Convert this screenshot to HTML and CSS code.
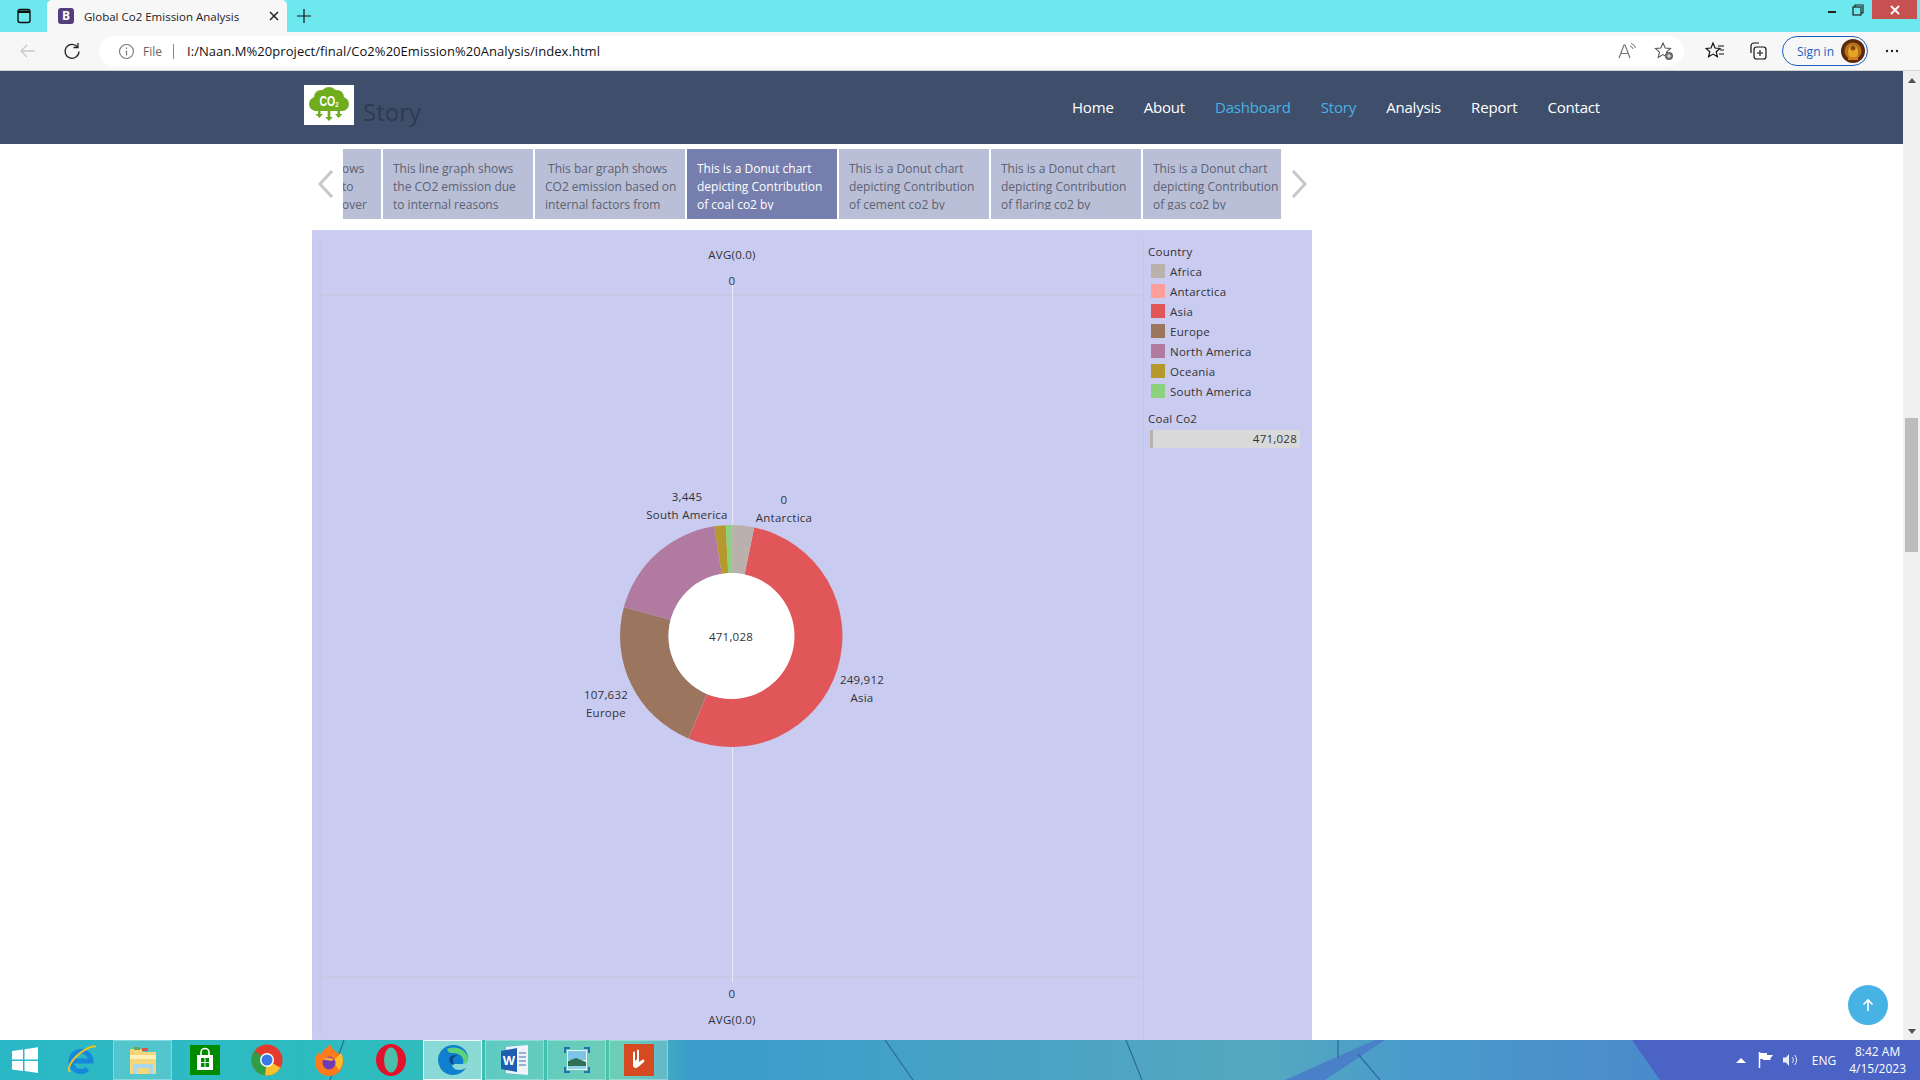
FILE: index.html
```html
<!DOCTYPE html>
<html lang="en">
<head>
    <meta charset="UTF-8">
    <title>Global Co2 Emission Analysis</title>
    <link rel="stylesheet" href="styles.css">
</head>
<body>
    <div class="screen">
        <div class="tabstrip">
            <svg class="winicon" width="16" height="16" viewBox="0 0 16 16"><rect x="2" y="1.500" width="12" height="13" rx="2" fill="none" stroke="#111" stroke-width="1.400"/><path d="M2 2.500h12v2.500h-12z" fill="#111"/></svg>
            <div class="tab">
                <span class="favicon">B</span>
                <span class="tabtitle">Global Co2 Emission Analysis</span>
                <svg width="10" height="10" viewBox="0 0 10 10"><path d="M1 1l8 8M9 1l-8 8" stroke="#222" stroke-width="1.500"/></svg>
            </div>
            <svg class="newtab" width="16" height="16" viewBox="0 0 16 16"><path d="M8 1v14M1 8h14" stroke="#111" stroke-width="1.200"/></svg>
            <div class="winbtns">
                <svg width="10" height="10" viewBox="0 0 10 10"><path d="M1 7h8" stroke="#222" stroke-width="2"/></svg>
                <svg class="restore" width="12" height="12" viewBox="0 0 12 12"><rect x="1" y="3" width="8" height="8" fill="none" stroke="#222" stroke-width="1.200"/><path d="M3 3v-2h8v8h-2" fill="none" stroke="#222" stroke-width="1.200"/></svg>
                <div class="closebtn"><svg width="10" height="10" viewBox="0 0 10 10"><path d="M1 1l8 8M9 1l-8 8" stroke="#fff" stroke-width="1.800"/></svg></div>
            </div>
        </div>

        <div class="toolbar">
            <svg class="backbtn" width="18" height="18" viewBox="0 0 18 18"><path d="M16 9h-14M8 3l-6 6 6 6" fill="none" stroke="#c9c9c9" stroke-width="1.300"/></svg>
            <svg class="reload" width="18" height="18" viewBox="0 0 18 18"><path d="M14.500 5a7 7 0 1 0 1.500 4.500" fill="none" stroke="#222" stroke-width="1.300"/><path d="M15 1v4.500h-4.500" fill="none" stroke="#222" stroke-width="1.300"/></svg>
            <div class="addressbar">
                <svg width="17" height="17" viewBox="0 0 17 17"><circle cx="8.500" cy="8.500" r="7" fill="none" stroke="#777" stroke-width="1.100"/><path d="M8.500 7.500v5M8.500 4.500v1.500" stroke="#777" stroke-width="1.200"/></svg>
                <span class="fileword">File</span>
                <span class="addrsep"></span>
                <span class="addr">I:/Naan.M%20project/final/Co2%20Emission%20Analysis/index.html</span>
                <span class="addrgap"></span>
                <svg width="20" height="18" viewBox="0 0 20 18"><path d="M2 16l5-13h1l5 13M4 11.500h7" fill="none" stroke="#777" stroke-width="1.200"/><path d="M13 4a4 4 0 0 1 3 3M14 1.500a6 6 0 0 1 4.500 4.500" fill="none" stroke="#777" stroke-width="1"/></svg>
                <svg class="favadd" width="20" height="20" viewBox="0 0 20 20"><path d="M9 2l2.200 5 5.300.5-4 3.600 1.200 5.300-4.700-2.800-4.700 2.800 1.200-5.300-4-3.600 5.300-.5z" fill="none" stroke="#555" stroke-width="1.100"/><circle cx="15" cy="15" r="4" fill="#666"/><path d="M15 12.800v4.400M12.800 15h4.400" stroke="#fff" stroke-width="1"/></svg>
            </div>
            <svg class="favlist" width="20" height="20" viewBox="0 0 20 20"><path d="M8 2l2 5 5 .4-3.800 3.300 1.200 5.100-4.400-2.700-4.400 2.700 1.200-5.100-3.800-3.300 5-.4z" fill="none" stroke="#111" stroke-width="1.200"/><path d="M13 5h6M15 9h4M14 13h5" stroke="#111" stroke-width="1.100"/></svg>
            <svg class="collections" width="20" height="20" viewBox="0 0 20 20"><path d="M3 12v-7a3 3 0 0 1 3-3h5" fill="none" stroke="#111" stroke-width="1.200"/><rect x="6" y="6" width="12" height="12" rx="2.500" fill="none" stroke="#111" stroke-width="1.200"/><path d="M12 9v6M9 12h6" stroke="#111" stroke-width="1.100"/></svg>
            <div class="signin">
                <span>Sign in</span>
                <svg width="24" height="24" viewBox="0 0 24 24"><circle cx="12" cy="12" r="12" fill="#5a2a0c"/><circle cx="12" cy="12" r="8.500" fill="#b5701a"/><ellipse cx="12" cy="13" rx="5" ry="7" fill="#e6a526"/><circle cx="12" cy="9" r="2.500" fill="#8a4a10"/><path d="M7 18h10v3h-10z" fill="#d87b14"/></svg>
            </div>
            <svg class="moredots" width="14" height="4" viewBox="0 0 14 4"><circle cx="2" cy="2" r="1.200" fill="#222"/><circle cx="7" cy="2" r="1.200" fill="#222"/><circle cx="12" cy="2" r="1.200" fill="#222"/></svg>
        </div>

        <div class="viewport">
            <div class="page">
                <nav class="navbar">
                    <div class="brand">
                        <div class="logo">
                            <svg width="40" height="40" viewBox="0 0 40 40">
                                <g fill="#6fad1e">
                                    <circle cx="7" cy="19" r="7"/>
                                    <circle cx="33" cy="19" r="7"/>
                                    <circle cx="12" cy="12" r="7"/>
                                    <circle cx="28" cy="12" r="7"/>
                                    <circle cx="20" cy="10" r="8"/>
                                    <path d="M7 14h26v12h-26z"/>
                                    <path d="M9 26h2.500v3h2.500l-3.700 4-3.700-4h2.400zM18.700 26h2.600v6h2.600l-3.900 4-3.900-4h2.600zM28.500 26h2.500v3h2.400l-3.700 4-3.700-4h2.500z"/>
                                </g>
                                <text class="logotext" transform="translate(20 21) scale(0.75 1)">CO<tspan class="logosub" dy="1">2</tspan></text>
                            </svg>
                        </div>
                        <span class="brandname">Story</span>
                    </div>
                    <ul class="navlinks">
                        <li>Home</li>
                        <li>About</li>
                        <li class="active">Dashboard</li>
                        <li class="active">Story</li>
                        <li>Analysis</li>
                        <li>Report</li>
                        <li>Contact</li>
                    </ul>
                </nav>

                <div class="storyrow">
                    <svg class="arrow" width="18" height="28" viewBox="0 0 18 28"><path d="M15 1l-12 13 12 13" fill="none" stroke="#c8c8c8" stroke-width="3"/></svg>
                    <div class="points">
                        <div class="point cut"><p>ows<br>to<br>over</p></div>
                        <div class="point"><p>This line graph shows the CO2 emission due to internal reasons</p></div>
                        <div class="point"><p>&nbsp;This bar graph shows CO2 emission based on internal factors from</p></div>
                        <div class="point current"><p>This is a Donut chart depicting Contribution of coal co2 by</p></div>
                        <div class="point"><p>This is a Donut chart depicting Contribution of cement co2 by</p></div>
                        <div class="point"><p>This is a Donut chart depicting Contribution of flaring co2 by</p></div>
                        <div class="point last"><p>This is a Donut chart depicting Contribution of gas co2 by</p></div>
                    </div>
                    <svg class="arrow" width="18" height="28" viewBox="0 0 18 28"><path d="M3 1l12 13-12 13" fill="none" stroke="#c8c8c8" stroke-width="3"/></svg>
                </div>

                <div class="vizpanel">
                    <svg class="donutview" width="831" height="810" viewBox="312 230 831 810">
                        <path class="gridline" d="M320 238v797M320 295h824M320 977h824"/>
                        <path class="axisline" d="M732.500 283v699"/>
                        <text class="lbl" x="732" y="259">AVG(0.0)</text>
                        <text class="lbl" x="732" y="285">0</text>
                        <text class="lbl" x="732" y="998">0</text>
                        <text class="lbl" x="732" y="1024">AVG(0.0)</text>

                        <path fill="#e15759" d="M754.200 527.400A111 111 0 1 1 688.500 738.400L707.100 693.900A62.700 62.700 0 1 0 744.500 574.700Z"/>
                        <path fill="#9c755f" d="M688.300 738.400A111 111 0 0 1 623.800 607.300L670.500 619.800A62.700 62.700 0 0 0 707 693.800Z"/>
                        <path fill="#b07aa1" d="M623.800 607.300A111 111 0 0 1 714.300 526.300L721.700 574.100A62.700 62.700 0 0 0 670.500 619.800Z"/>
                        <path fill="#b6992d" d="M714.300 526.300A111 111 0 0 1 725.700 525.200L728.200 573.400A62.700 62.700 0 0 0 721.700 574.100Z"/>
                        <path fill="#8cd17d" d="M725.700 525.200A111 111 0 0 1 731.500 525L731.500 573.300A62.700 62.700 0 0 0 728.200 573.400Z"/>
                        <path fill="#bab0ac" d="M731.500 525A111 111 0 0 1 754.200 527.400L744.500 574.700A62.700 62.700 0 0 0 731.500 573.300Z"/>
                        <circle cx="731.500" cy="636" r="63" fill="#fff"/>

                        <text class="lbl" x="687" y="501">3,445</text>
                        <text class="lbl" x="687" y="519">South America</text>
                        <text class="lbl" x="784" y="504">0</text>
                        <text class="lbl" x="784" y="522">Antarctica</text>
                        <text class="lbl" x="862" y="684">249,912</text>
                        <text class="lbl" x="862" y="702">Asia</text>
                        <text class="lbl" x="606" y="699">107,632</text>
                        <text class="lbl" x="606" y="717">Europe</text>
                        <text class="lbl" x="731" y="641">471,028</text>
                    </svg>
                    <aside class="legend">
                        <div class="legendtitle">Country</div>
                        <ul class="legendlist">
                            <li><i class="swatch africa"></i>Africa</li>
                            <li><i class="swatch antarctica"></i>Antarctica</li>
                            <li><i class="swatch asia"></i>Asia</li>
                            <li><i class="swatch europe"></i>Europe</li>
                            <li><i class="swatch northam"></i>North America</li>
                            <li><i class="swatch oceania"></i>Oceania</li>
                            <li><i class="swatch southam"></i>South America</li>
                        </ul>
                        <div class="legendtitle coal">Coal Co2</div>
                        <div class="coalbar">471,028</div>
                    </aside>
                </div>
                <div class="totop"><svg width="14" height="14" viewBox="0 0 14 14"><path d="M7 13v-11M2.500 6.500l4.500-4.500 4.500 4.500" fill="none" stroke="#fff" stroke-width="1.600"/></svg></div>
            </div>
            <div class="scrollbar">
                <span class="uparrow"></span>
                <div class="thumb"></div>
                <span class="downarrow"></span>
            </div>
        </div>

        <div class="taskbar">
            <!-- wallpaper showing through the glass bar -->
            <svg class="wallpaper" width="1920" height="40" viewBox="0 0 1920 40">
                <path d="M1632 0l28 40h260v-40z" fill="#4a63c4"/>
                <path d="M1285 40l90-40h10l-60 40z" fill="#4a80c8"/>
                <path d="M344 0l-14 40M885 0l28 40M1126 0l16 40M1338 0v18M1358 14l22 26" fill="none" stroke="#2b6a9c" stroke-width="1.200"/>
            </svg>
            <div class="taskitem first"><svg width="28" height="26" viewBox="0 0 28 26"><path d="M1 4l11-1.500v10h-11zM13.500 2.200l13.500-2v12.300h-13.500zM1 14h11v10l-11-1.500zM13.500 14h13.500v12l-13.500-2z" fill="#fff"/></svg></div>
            <div class="taskitem"><svg width="34" height="32" viewBox="0 0 34 32"><path d="M7 17h20a10 10 0 1 0-3.500 8" fill="none" stroke="#1787dc" stroke-width="5"/><path d="M6 28c-3-3 1-12 9-18 8-6 15-9 17-7" fill="none" stroke="#f0c419" stroke-width="1.800"/></svg></div>
            <div class="taskitem lit"><svg width="32" height="32" viewBox="0 0 32 32"><path d="M3 5h11l2 3h13v22h-26z" fill="#f4d77a"/><path d="M3 11h26v4h-26z" fill="#fff0b8"/><path d="M7 3h6v3h-6z" fill="#6aa84f"/><path d="M15 4h6v3h-6z" fill="#d9534f"/><path d="M6 30v-10h20v10h-4v-6h-12v6z" fill="#a8d8ef"/></svg></div>
            <div class="taskitem"><svg width="30" height="30" viewBox="0 0 30 30"><rect width="30" height="30" fill="#008a00"/><path d="M7 10h16v15h-16z" fill="#fff"/><path d="M11 10v-2.500a4 4 0 0 1 8 0v2.500" fill="none" stroke="#fff" stroke-width="1.600"/><path d="M11 13h3.500v4h-3.500zM15.500 13h3.500v4h-3.500zM11 18h3.500v4h-3.500zM15.500 18h3.500v4h-3.500z" fill="#008a00"/></svg></div>
            <div class="taskitem"><svg width="32" height="32" viewBox="0 0 32 32"><circle cx="16" cy="16" r="15.500" fill="#e33b2e"/><path d="M16 16l13.500 7.800a15.500 15.500 0 0 1-13.500 7.700a15.500 15.500 0 0 1-9-3z" fill="#fbc02d"/><path d="M16 16l-2 15.400a15.500 15.500 0 0 1-13.500-15.400a15.500 15.500 0 0 1 3-9z" fill="#2f9e44"/><circle cx="16" cy="16" r="7" fill="#fff"/><circle cx="16" cy="16" r="5.500" fill="#3b78e7"/></svg></div>
            <div class="taskitem"><svg width="32" height="34" viewBox="0 0 32 34"><path d="M16 33a14 14 0 0 1-14-14c0-5 2-8 4-10l1 3c2-4 6-7 12-11-1 3 0 5 3 7 5 3 8 6 8 11a14 14 0 0 1-14 14z" fill="#ff7a1a"/><path d="M28 10c3 4 2 12-2 17l-6-9z" fill="#ffbd2e"/><circle cx="16" cy="20" r="6.500" fill="#6d3bb8"/><path d="M10 16c3-2 8-2 11 1l-3 1c-3-1-5 0-8-2z" fill="#ffa436"/></svg></div>
            <div class="taskitem"><svg width="30" height="32" viewBox="0 0 30 32"><ellipse cx="15" cy="16" rx="15" ry="16" fill="#e3122a"/><ellipse cx="15" cy="16" rx="7" ry="12.500" fill="#4bbfaa"/></svg></div>
            <div class="taskitem on"><svg width="32" height="32" viewBox="0 0 32 32"><path d="M1 15c1-9 8-14 15-14 9 0 15 6 15 13 0 4-3 6-7 6h-9c0 3 3 6 7 6 3 0 5-1 7-2-3 4-7 7-13 7-9 0-15-7-15-16z" fill="#0f7fd0"/><path d="M10 5c8-4 20 0 21 10 0 3-2 5-5 5 2-6-3-11-9-11-3 0-5 1-7-4z" fill="#5fd37a"/><path d="M17 21c-4-1-6-5-4-8 2-2 5-3 8-1-4 0-5 2-5 4 0 2 1 4 1 5z" fill="#0b4a8a"/></svg></div>
            <div class="taskitem lit"><svg width="30" height="32" viewBox="0 0 30 32"><path d="M6 3l22-2v30l-22-2z" fill="#eef3fa"/><path d="M1 7l16-3v24l-16-3z" fill="#1f5db0"/><text x="9" y="21" class="wordglyph">W</text><path d="M19 9h7M19 13h7M19 17h7M19 21h7" stroke="#7b9cc9" stroke-width="1.300"/></svg></div>
            <div class="taskitem lit"><svg width="32" height="32" viewBox="0 0 32 32"><path d="M4 9v-5h5M23 4h5v5M28 23v5h-5M9 28h-5v-5" fill="none" stroke="#2a6db0" stroke-width="2"/><rect x="6" y="6" width="20" height="20" fill="#e8f4f8"/><rect x="7" y="7" width="18" height="9" fill="#7ec4e6"/><path d="M7 17l8-3 10 4v7h-18z" fill="#2f6f55"/><path d="M7 22h18v3h-18z" fill="#8fd3e8"/></svg></div>
            <div class="taskitem lit"><svg width="30" height="32" viewBox="0 0 30 32"><rect width="30" height="32" fill="#d64a22"/><path d="M9 9v12c0 3 3 4 5 2l6-5c1-2 0-3-2-2l-3 2v-11c0-2-2-2-2 0v8l-2 2v-8c0-2-2-2-2 0z" fill="#fff"/></svg></div>
            <div class="tray">
                <svg width="10" height="6" viewBox="0 0 10 6"><path d="M0 6l5-5 5 5z" fill="#fff"/></svg>
                <svg class="flag" width="16" height="18" viewBox="0 0 16 18"><path d="M1.500 1v16" stroke="#fff" stroke-width="1.500"/><path d="M2 2h7v2h6l-3 4 1 1h-8v-1h-3z" fill="#fff"/></svg>
                <svg class="speaker" width="16" height="16" viewBox="0 0 16 16"><path d="M1 5.500h3l3-3.500v12l-3-3.500h-3z" fill="#e8ecf8"/><path d="M10 5a4 4 0 0 1 0 6M12.500 3a7 7 0 0 1 0 10" fill="none" stroke="#e8ecf8" stroke-width="1"/></svg>
                <span class="lang">ENG</span>
                <div class="clock"><span>8:42 AM</span><span>4/15/2023</span></div>
            </div>
        </div>
    </div>
</body>
</html>
```

FILE: styles.css
```css
:root {
    --nav-bg: #3f4f6b;
    --panel-bg: #c9cbf0;
    --point-bg: #b9bfd6;
    --point-on: #767ead;
    --link-on: #47b2e4;
    --chart-text: #333;
}

* {
    box-sizing: border-box;
}

html, body {
    margin: 0;
    height: 100%;
    overflow: hidden;
}

body {
    font-family: "Open Sans", "Noto Sans", sans-serif;
    background: #fff;
}

.screen {
    width: 1920px;
    height: 1080px;
    display: flex;
    flex-direction: column;
}

/* browser chrome */
.tabstrip {
    height: 32px;
    flex: none;
    display: flex;
    align-items: flex-end;
    background-color: #6ce8ee;
}

.winicon {
    margin: 0 15px 8px 16px;
}

.tab {
    width: 240px;
    height: 32px;
    display: flex;
    align-items: center;
    padding: 0 8px 0 11px;
    background-color: #f7f7f7;
    border-radius: 5px 5px 0 0;
}

.favicon {
    width: 16px;
    height: 16px;
    border-radius: 3px;
    background-color: #563d7c;
    color: #fff;
    font-size: 12px;
    font-weight: 700;
    line-height: 16px;
    text-align: center;
}

.tabtitle {
    flex: 1;
    margin-left: 10px;
    font-size: 11.500px;
    color: #222;
    white-space: nowrap;
}

.newtab {
    margin: 0 0 8px 9px;
}

.winbtns {
    margin-left: auto;
    align-self: flex-start;
    display: flex;
    align-items: center;
    height: 19px;
}

.restore {
    margin-left: 15px;
    margin-right: 8px;
}

.closebtn {
    width: 45px;
    height: 19px;
    display: flex;
    align-items: center;
    justify-content: center;
    background-color: #c75050;
    margin-right: 3px;
}

.toolbar {
    height: 39px;
    flex: none;
    display: flex;
    align-items: center;
    background-color: #f7f7f7;
    border-bottom: 1px solid #d2d2d2;
}

.backbtn {
    margin-left: 19px;
}

.reload {
    margin-left: 26px;
}

.addressbar {
    width: 1585px;
    height: 30px;
    margin-left: 18px;
    padding: 0 10px 0 19px;
    display: flex;
    align-items: center;
    background-color: #fff;
    border-radius: 15px;
}

.fileword {
    margin-left: 8px;
    font-size: 12px;
    color: #666;
}

.addrsep {
    width: 1px;
    height: 15px;
    margin: 0 13px 0 11px;
    background-color: #888;
}

.addr {
    font-size: 13px;
    letter-spacing: 0.05px;
    color: #111;
}

.addrgap {
    flex: 1;
}

.favadd {
    margin-left: 17px;
}

.favlist {
    margin-left: 21px;
}

.collections {
    margin-left: 23px;
}

.signin {
    width: 86px;
    height: 30px;
    margin-left: 14px;
    padding: 0 2px 0 14px;
    display: flex;
    align-items: center;
    justify-content: space-between;
    border: 1px solid #1a5fc0;
    border-radius: 15px;
    color: #1a5fc0;
    font-size: 12px;
}

.moredots {
    margin-left: 17px;
}

/* page */
.viewport {
    flex: 1;
    min-height: 0;
    display: flex;
}

.page {
    flex: 1;
    min-width: 0;
    position: relative;
    overflow: hidden;
    background: #fff;
}

.navbar {
    height: 73px;
    padding: 0 303px 0 304px;
    display: flex;
    align-items: center;
    justify-content: space-between;
    background-color: var(--nav-bg);
}

.brand {
    display: flex;
    align-items: flex-start;
    gap: 9px;
}

.logo {
    width: 50px;
    height: 40px;
    display: flex;
    justify-content: center;
    background: #fff;
}

.logotext {
    font-family: "Liberation Sans", sans-serif;
    font-size: 14px;
    font-weight: 700;
    fill: #fff;
    text-anchor: middle;
}

.logosub {
    font-size: 8px;
}

.brandname {
    margin-top: 9px;
    font-size: 24px;
    line-height: 36px;
    color: #2e3a52;
}

.navlinks {
    list-style: none;
    margin: 0 0 2px;
    padding: 0;
    display: flex;
    gap: 30px;
    font-size: 15px;
    letter-spacing: -0.18px;
    color: #fff;
}

.navlinks .active {
    color: var(--link-on);
}

.storyrow {
    height: 86px;
    padding: 5px 0 11px 317px;
    display: flex;
    align-items: center;
}

.points {
    width: 938px;
    margin: 0 9px 0 8px;
    display: flex;
    gap: 2px;
}

.point {
    width: 150px;
    height: 70px;
    flex: none;
    padding: 11px 4px 0 10px;
    overflow: hidden;
    background-color: var(--point-bg);
    color: #5d6173;
}

/* last line gets cut through the descenders, as in the slider */
.point p {
    height: 50px;
    margin: 0;
    overflow: hidden;
    font-size: 12px;
    line-height: 18px;
}

.point.cut {
    width: 38px;
    padding-left: 0;
}

.point.cut p {
    margin-left: -1px;
}

.point.last {
    width: 138px;
    padding-right: 0;
}

.point.current {
    background-color: var(--point-on);
    color: #fff;
}

.vizpanel {
    width: 1000px;
    height: 810px;
    margin-left: 312px;
    display: flex;
    background-color: var(--panel-bg);
}

.donutview {
    display: block;
    flex: none;
}

.gridline {
    fill: none;
    stroke: #c4c6dd;
    stroke-width: 1;
}

.axisline {
    fill: none;
    stroke: #e8e9f8;
    stroke-width: 1;
}

.lbl {
    font-size: 11.500px;
    letter-spacing: 0.25px;
    fill: var(--chart-text);
    text-anchor: middle;
}

.legend {
    flex: 1;
    margin-top: 8px;
    padding: 6px 12px 0 4px;
    border-left: 1px solid #c4c6dd;
    font-size: 11.500px;
    letter-spacing: 0.25px;
    color: var(--chart-text);
}

.legendtitle {
    line-height: 16px;
}

.legendlist {
    list-style: none;
    margin: 1px 0 0;
    padding: 0;
}

.legendlist li {
    height: 20px;
    padding-left: 3px;
    display: flex;
    align-items: center;
    gap: 5px;
}

.swatch {
    width: 14px;
    height: 14px;
}

.africa { background-color: #bab0ac; }
.antarctica { background-color: #ff9d9a; }
.asia { background-color: #e15759; }
.europe { background-color: #9c755f; }
.northam { background-color: #b07aa1; }
.oceania { background-color: #b6992d; }
.southam { background-color: #8cd17d; }

.coal {
    margin-top: 10px;
}

.coalbar {
    height: 18px;
    margin: 3px 0 0 2px;
    padding-right: 3px;
    text-align: right;
    line-height: 18px;
    background-color: #d9d9d9;
    border-left: 3px solid #bab0ac;
}

.totop {
    position: absolute;
    right: 15px;
    bottom: 15px;
    width: 40px;
    height: 40px;
    display: flex;
    align-items: center;
    justify-content: center;
    border-radius: 50%;
    background-color: var(--link-on);
}

/* scrollbar */
.scrollbar {
    width: 17px;
    flex: none;
    padding-top: 7px;
    display: flex;
    flex-direction: column;
    align-items: center;
    background-color: #f0f0f0;
}

.uparrow {
    border: 4px solid transparent;
    border-top: 0;
    border-bottom: 5px solid #505050;
}

.thumb {
    width: 13px;
    height: 134px;
    margin-top: 335px;
    background-color: #bdbdbd;
}

.downarrow {
    margin-top: auto;
    margin-bottom: 6px;
    border: 4px solid transparent;
    border-bottom: 0;
    border-top: 5px solid #505050;
}

/* taskbar */
.taskbar {
    position: relative;
    height: 40px;
    flex: none;
    display: flex;
    align-items: center;
    padding-left: 2px;
    gap: 3px;
    background: linear-gradient(90deg, #2bb8c6 0, #2fbcbe 400px, #4cc4a8 620px, #3a9ccb 690px, #55a8bf 1270px, #4a9ccb 1400px, #4a8ccb 1632px);
}

.wallpaper {
    position: absolute;
    left: 0;
    top: 0;
}

.taskitem {
    position: relative;
    width: 59px;
    height: 40px;
    flex: none;
    display: flex;
    align-items: center;
    justify-content: center;
}

.taskitem.first {
    width: 46px;
}

.taskitem.lit {
    background-color: rgba(255, 255, 255, 0.18);
    border: 1px solid rgba(255, 255, 255, 0.3);
}

.taskitem.on {
    background-color: rgba(255, 255, 255, 0.42);
    border: 1px solid rgba(255, 255, 255, 0.85);
}

.wordglyph {
    font-family: "Liberation Sans", sans-serif;
    font-size: 13px;
    font-weight: 700;
    fill: #fff;
    text-anchor: middle;
}

.tray {
    position: relative;
    margin-left: auto;
    padding-right: 14px;
    display: flex;
    align-items: center;
    color: #fff;
    font-size: 12px;
}

.flag {
    margin-left: 12px;
}

.speaker {
    margin-left: 8px;
}

.lang {
    margin-left: 14px;
}

.clock {
    margin-left: 13px;
    display: flex;
    flex-direction: column;
    align-items: center;
    line-height: 17px;
}
```
